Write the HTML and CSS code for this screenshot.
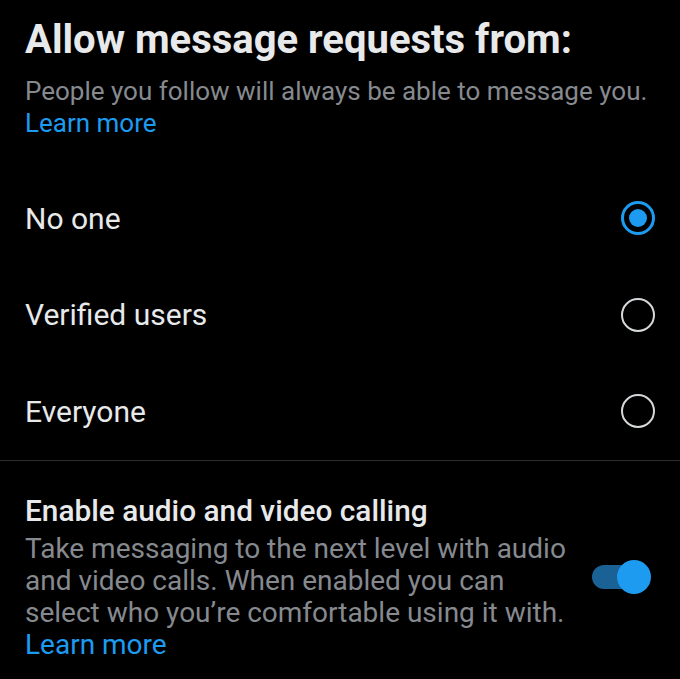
FILE: index.html
```html
<!DOCTYPE html>
<html lang="en">
<head>
<meta charset="utf-8">
<title>Direct Messages</title>
<link rel="stylesheet" href="styles.css">
</head>
<body>
<main class="settings">
  <section class="requests">
    <h1 class="requests-title">Allow message requests from:</h1>
    <p class="hint">People you follow will always be able to message you. <a class="link" href="#">Learn more</a></p>
    <ul class="options">
      <li class="option">
        <span class="option-label">No one</span>
        <span class="radio radio-on"></span>
      </li>
      <li class="option">
        <span class="option-label">Verified users</span>
        <span class="radio"></span>
      </li>
      <li class="option">
        <span class="option-label">Everyone</span>
        <span class="radio"></span>
      </li>
    </ul>
  </section>
  <section class="calling">
    <div class="calling-text">
      <h2 class="calling-title">Enable audio and video calling</h2>
      <p class="hint calling-hint">Take messaging to the next level with audio and video calls. When enabled you can select who you’re comfortable using it with. <a class="link" href="#">Learn more</a></p>
    </div>
    <span class="switch"><span class="switch-thumb"></span></span>
  </section>
</main>
</body>
</html>
```
FILE: styles.css
```css
html, body {
  margin: 0;
  background: #000;
}

body {
  font-family: Roboto, "Noto Sans", sans-serif;
  color: #e7e9ea;
}

.settings {
  width: 680px;
}

.requests {
  padding: 16px 25px 0 25px;
}

.requests-title {
  margin: 0;
  font-size: 40px;
  line-height: 48px;
  font-weight: 700;
  color: #e7e9ea;
}

.hint {
  margin: 11px 0 0 0;
  font-size: 26px;
  line-height: 32px;
  color: #868a8f;
}

.link {
  display: block;
  color: #1d9bf0;
  text-decoration: none;
}

.options {
  list-style: none;
  margin: 31px 0 0 0;
  padding: 0;
}

.option {
  display: flex;
  align-items: center;
  justify-content: space-between;
  height: 96.5px;
}

.option-label {
  font-size: 30px;
  color: #e7e9ea;
}

.radio {
  box-sizing: border-box;
  width: 34px;
  height: 34px;
  border: 2px solid #d6d9db;
  border-radius: 50%;
  display: flex;
  align-items: center;
  justify-content: center;
}

.radio-on {
  border: 3.5px solid #1d9bf0;
}

.radio-on::after {
  content: "";
  width: 18px;
  height: 18px;
  border-radius: 50%;
  background: #1d9bf0;
}

.calling {
  border-top: 1px solid #2a2d30;
  padding: 32px 25px 0 25px;
  display: flex;
  align-items: center;
  justify-content: space-between;
}

.calling-text {
  width: 550px;
}

.calling-title {
  margin: 0;
  font-size: 29.8px;
  line-height: 36px;
  font-weight: 500;
  color: #e7e9ea;
}

.calling-hint {
  margin-top: 4px;
  font-size: 28px;
}

.switch {
  position: relative;
  width: 51px;
  height: 24px;
  margin-right: 12px;
  border-radius: 12px;
  background: #1a6195;
}

.switch-thumb {
  position: absolute;
  right: -8px;
  top: -5px;
  width: 34px;
  height: 34px;
  border-radius: 50%;
  background: #1d9bf0;
}
```
